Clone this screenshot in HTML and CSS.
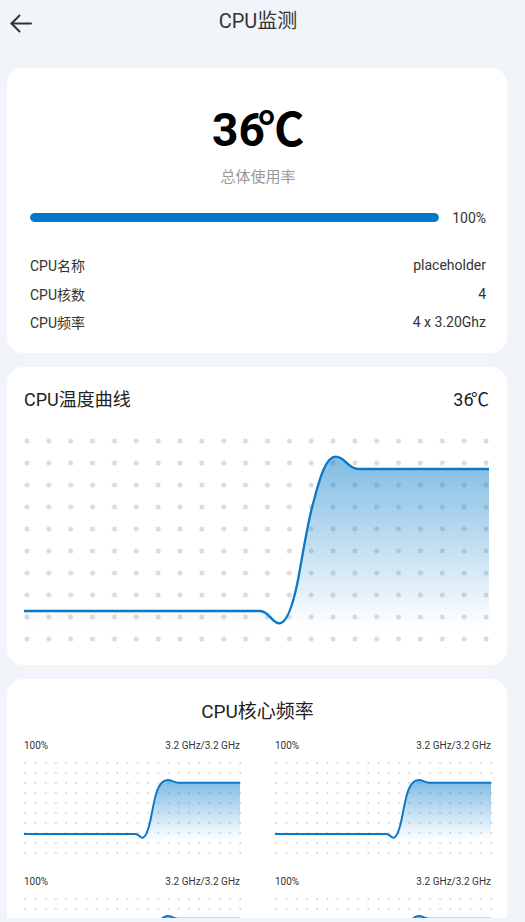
FILE: index.html
```html
<!DOCTYPE html>
<html lang="zh-CN">
<head>
    <meta charset="UTF-8">
    <meta name="viewport" content="width=device-width, initial-scale=1.0">
    <title>CPU监测</title>
    <link rel="stylesheet" href="styles.css">
</head>
<body>
    <div class="page">
        <header class="topbar">
            <button class="back" type="button" aria-label="返回">
                <svg width="22" height="20" viewBox="0 0 22 20" fill="none" stroke="currentColor" stroke-width="2" stroke-linecap="round" stroke-linejoin="round">
                    <path d="M21 9.5H1.5"></path>
                    <path d="M9.5 1.5L1.5 9.5L9.5 17.5"></path>
                </svg>
            </button>
            <h1 class="title">CPU监测</h1>
        </header>

        <main class="content">
            <section class="card summary">
                <div class="big-temp">3<span class="kern">6</span>℃</div>
                <div class="usage-label">总体使用率</div>
                <div class="progress-row">
                    <div class="bar"><div class="bar-fill" style="width: 100%"></div></div>
                    <span class="pct">100%</span>
                </div>
                <div class="info">
                    <div class="info-row"><span>CPU名称</span><span>placeholder</span></div>
                    <div class="info-row"><span>CPU核数</span><span>4</span></div>
                    <div class="info-row"><span>CPU频率</span><span>4 x 3.20Ghz</span></div>
                </div>
            </section>

            <section class="card temp">
                <div class="card-head">
                    <h2 class="card-title">CPU温度曲线</h2>
                    <span class="card-value">3<span class="kern">6</span>℃</span>
                </div>
                <svg class="temp-chart" width="465" height="210" viewBox="0 0 465 210">
                    <defs>
                        <pattern id="dotsBig" width="21.857" height="22" patternUnits="userSpaceOnUse">
                            <circle cx="3" cy="6" r="2.5" fill="#dcdcdc"></circle>
                        </pattern>
                        <linearGradient id="fillBig" x1="0" y1="21.7" x2="0" y2="192" gradientUnits="userSpaceOnUse">
                            <stop offset="0" stop-color="#0078c8" stop-opacity="0.5"></stop>
                            <stop offset="1" stop-color="#0078c8" stop-opacity="0"></stop>
                        </linearGradient>
                    </defs>
                    <rect width="468" height="210" fill="url(#dotsBig)"></rect>
                    <path d="M0,176 L236,176 C245,176 248,188.3 255.3,188.3 C264,188.3 270,165 274,145 C279,118 284,85 290,65 C296,42 302,21.7 311.7,21.7 C321,21.7 324,34 334,34 L465,34 L465,192 L0,192 Z" fill="url(#fillBig)"></path>
                    <path d="M0,176 L236,176 C245,176 248,188.3 255.3,188.3 C264,188.3 270,165 274,145 C279,118 284,85 290,65 C296,42 302,21.7 311.7,21.7 C321,21.7 324,34 334,34 L465,34" fill="none" stroke="#0a78c8" stroke-width="2.3"></path>
                </svg>
            </section>

            <section class="card cores">
                <h2 class="card-title center">CPU核心频率</h2>
                <div class="core-grid">
                    <div class="core">
                        <div class="core-head"><span>100%</span><span>3.2 GHz/3.2 GHz</span></div>
                        <svg class="core-chart" width="216" height="100" viewBox="0 0 216 100">
                            <defs>
                                <pattern id="dotsSmall" width="10.238" height="10" patternUnits="userSpaceOnUse">
                                    <circle cx="1.2" cy="5" r="1.1" fill="#d6d6d6"></circle>
                                </pattern>
                                <linearGradient id="fillSmall" x1="0" y1="22" x2="0" y2="82" gradientUnits="userSpaceOnUse">
                                    <stop offset="0" stop-color="#0078c8" stop-opacity="0.5"></stop>
                                    <stop offset="1" stop-color="#0078c8" stop-opacity="0"></stop>
                                </linearGradient>
                            </defs>
                            <rect width="218" height="100" fill="url(#dotsSmall)"></rect>
                            <path class="core-fill" d="M0,76 L111,76 C115,76 116,79.7 118.3,79.7 C122,79.7 124.5,71 126.5,62 C128.5,52 130.5,40 133,33 C136,25 139,22 143.7,22 C148,22 150,24.7 154.5,24.7 L216,24.7 L216,82 L0,82 Z"></path>
                            <path class="core-line" d="M0,76 L111,76 C115,76 116,79.7 118.3,79.7 C122,79.7 124.5,71 126.5,62 C128.5,52 130.5,40 133,33 C136,25 139,22 143.7,22 C148,22 150,24.7 154.5,24.7 L216,24.7"></path>
                        </svg>
                    </div>
                    <div class="core">
                        <div class="core-head"><span>100%</span><span>3.2 GHz/3.2 GHz</span></div>
                        <svg class="core-chart" width="216" height="100" viewBox="0 0 216 100">
                            <rect width="218" height="100" fill="url(#dotsSmall)"></rect>
                            <path class="core-fill" d="M0,76 L111,76 C115,76 116,79.7 118.3,79.7 C122,79.7 124.5,71 126.5,62 C128.5,52 130.5,40 133,33 C136,25 139,22 143.7,22 C148,22 150,24.7 154.5,24.7 L216,24.7 L216,82 L0,82 Z"></path>
                            <path class="core-line" d="M0,76 L111,76 C115,76 116,79.7 118.3,79.7 C122,79.7 124.5,71 126.5,62 C128.5,52 130.5,40 133,33 C136,25 139,22 143.7,22 C148,22 150,24.7 154.5,24.7 L216,24.7"></path>
                        </svg>
                    </div>
                    <div class="core">
                        <div class="core-head"><span>100%</span><span>3.2 GHz/3.2 GHz</span></div>
                        <svg class="core-chart" width="216" height="100" viewBox="0 0 216 100">
                            <rect width="218" height="100" fill="url(#dotsSmall)"></rect>
                            <path class="core-fill" d="M0,76 L111,76 C115,76 116,79.7 118.3,79.7 C122,79.7 124.5,71 126.5,62 C128.5,52 130.5,40 133,33 C136,25 139,22 143.7,22 C148,22 150,24.7 154.5,24.7 L216,24.7 L216,82 L0,82 Z"></path>
                            <path class="core-line" d="M0,76 L111,76 C115,76 116,79.7 118.3,79.7 C122,79.7 124.5,71 126.5,62 C128.5,52 130.5,40 133,33 C136,25 139,22 143.7,22 C148,22 150,24.7 154.5,24.7 L216,24.7"></path>
                        </svg>
                    </div>
                    <div class="core">
                        <div class="core-head"><span>100%</span><span>3.2 GHz/3.2 GHz</span></div>
                        <svg class="core-chart" width="216" height="100" viewBox="0 0 216 100">
                            <rect width="218" height="100" fill="url(#dotsSmall)"></rect>
                            <path class="core-fill" d="M0,76 L111,76 C115,76 116,79.7 118.3,79.7 C122,79.7 124.5,71 126.5,62 C128.5,52 130.5,40 133,33 C136,25 139,22 143.7,22 C148,22 150,24.7 154.5,24.7 L216,24.7 L216,82 L0,82 Z"></path>
                            <path class="core-line" d="M0,76 L111,76 C115,76 116,79.7 118.3,79.7 C122,79.7 124.5,71 126.5,62 C128.5,52 130.5,40 133,33 C136,25 139,22 143.7,22 C148,22 150,24.7 154.5,24.7 L216,24.7"></path>
                        </svg>
                    </div>
                </div>
            </section>
        </main>
    </div>
</body>
</html>
```

FILE: styles.css
```css
body {
    font-family: Roboto, "Noto Sans CJK SC", sans-serif;
    margin: 0;
    padding: 0;
    color: #333;
    background-color: #f1f4f9;
}
.page {
    height: 918px;
    overflow: hidden;
}
.topbar {
    display: grid;
    grid-template-columns: 40px 1fr 49px;
    align-items: center;
    height: 42px;
}
.back {
    align-self: start;
    padding: 14px 0 0 10px;
    border: none;
    background: none;
    color: #333;
    cursor: pointer;
    line-height: 0;
    text-align: left;
}
.title {
    margin: 0;
    font-size: 20px;
    font-weight: 400;
    line-height: 26px;
    text-align: center;
    color: #333;
}
.content {
    display: flex;
    flex-direction: column;
    gap: 14px;
    padding: 26px 18px 0 7px;
}
.card {
    background-color: #fff;
    border-radius: 16px;
}
.summary {
    padding: 34px 21px 16.5px 23px;
}
.big-temp {
    font-size: 46px;
    font-weight: 700;
    line-height: 56px;
    text-align: center;
    color: #000;
}
.big-temp .kern {
    letter-spacing: -7px;
}
.usage-label {
    margin-top: 9px;
    font-size: 15px;
    line-height: 20px;
    text-align: center;
    color: #999;
}
.progress-row {
    display: flex;
    align-items: center;
    gap: 13px;
    height: 19px;
    margin-top: 21px;
}
.bar {
    flex: 1;
    height: 9px;
    border-radius: 5px;
    background-color: #e3e8ef;
    overflow: hidden;
}
.bar-fill {
    height: 100%;
    border-radius: 5px;
    background-color: #0079c8;
}
.pct {
    font-size: 14px;
}
.info {
    margin-top: 24px;
}
.info-row {
    display: flex;
    justify-content: space-between;
    align-items: center;
    height: 28.5px;
    font-size: 14px;
    color: #333;
}
.temp {
    padding: 21px 18px 20px 17px;
}
.card-head {
    display: flex;
    justify-content: space-between;
    align-items: center;
}
.card-title {
    margin: 0;
    font-size: 18px;
    font-weight: 400;
    line-height: 24px;
    color: #222;
}
.card-title.center {
    font-size: 19px;
    text-align: center;
}
.card-value {
    font-size: 18px;
    line-height: 24px;
    color: #222;
}
.card-value .kern {
    letter-spacing: -2.5px;
}
.temp-chart {
    display: block;
    margin-top: 23px;
    overflow: visible;
}
.cores {
    padding: 21px 16px 20px 17px;
}
.core-grid {
    display: grid;
    grid-template-columns: 216px 216px;
    column-gap: 35px;
    row-gap: 17px;
    margin-top: 15px;
}
.core-head {
    display: flex;
    justify-content: space-between;
    font-size: 10px;
    line-height: 14px;
    color: #333;
}
.core-chart {
    display: block;
    margin-top: 5px;
    overflow: visible;
}
.core-fill {
    fill: url(#fillSmall);
}
.core-line {
    fill: none;
    stroke: #0a78c8;
    stroke-width: 2;
}
```
